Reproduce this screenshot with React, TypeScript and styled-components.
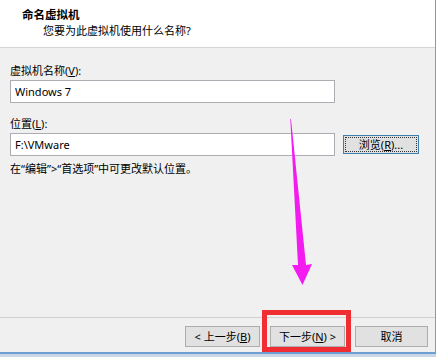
import styled, { createGlobalStyle } from 'styled-components';

const GlobalStyle = createGlobalStyle`
  html, body {
    margin: 0;
    padding: 0;
    background: #c9d6e3;
  }
  body {
    font-family: "Noto Sans", "Noto Sans CJK SC", sans-serif;
    font-size: 11px;
    color: #000;
  }
`;

const Ventana = styled.div`
  position: relative;
  width: 435px;
  height: 352px;
  background: #f0f0f0;
  border-right: 1px solid #6c9fd2;
  border-bottom: 2px solid #6c9fd2;
  display: flex;
  flex-direction: column;
  overflow: hidden;
`;

const Cabecera = styled.div`
  height: 48px;
  background: #fff;
  border-bottom: 1px solid #d5d5d5;
  padding: 7px 0 0 22px;
  box-sizing: border-box;
  flex-shrink: 0;
`;

const Titulo = styled.div`
  font-weight: bold;
  font-size: 11.5px;
  line-height: 16px;
`;

const Subtitulo = styled.div`
  line-height: 15px;
  margin: 0 0 0 21px;
`;

const Cuerpo = styled.div`
  flex: 1;
  padding: 15px 0 0 10px;
  display: flex;
  flex-direction: column;
`;

const Etiqueta = styled.label<{ $arriba?: number }>`
  display: block;
  line-height: 16px;
  margin-top: ${p => p.$arriba ?? 0}px;
  margin-bottom: 1px;
`;

const Fila = styled.div`
  display: flex;
  align-items: center;
  gap: 8px;
`;

const Entrada = styled.input`
  width: 325px;
  height: 23px;
  box-sizing: border-box;
  border: 1px solid #abadb3;
  background: #fff;
  padding: 0 4px;
  font-family: inherit;
  font-size: 11px;
  color: #000;
  outline: none;
`;

const Boton = styled.button<{ $foco?: boolean; $ancho?: number }>`
  width: ${p => p.$ancho ?? 75}px;
  height: ${p => (p.$foco ? 19 : 21)}px;
  box-sizing: border-box;
  background: #e1e1e1;
  border: 1px solid ${p => (p.$foco ? '#3c7fb1' : '#adadad')};
  font-family: inherit;
  font-size: 11px;
  color: #000;
  padding: 0;
  line-height: 1;
  outline: ${p => (p.$foco ? '1px dotted #333' : 'none')};
  outline-offset: -3px;
`;

const Nota = styled.div`
  line-height: 16px;
  margin-top: 5px;
`;

const Pie = styled.div`
  height: 35px;
  box-sizing: border-box;
  border-top: 1px solid #d0d0d0;
  padding: 8px 7px 0 0;
  display: flex;
  justify-content: flex-end;
  gap: 10px;
  flex-shrink: 0;
`;

const Marco = styled.div`
  position: absolute;
  left: 262px;
  top: 310px;
  width: 89px;
  height: 42px;
  box-sizing: border-box;
  border: 5px solid #ef2d32;
  pointer-events: none;
`;

const Flecha = styled.svg`
  position: absolute;
  left: 0;
  top: 0;
  pointer-events: none;
`;

export default function App() {
  return (
    <>
      <GlobalStyle />
      <Ventana>
        <Cabecera>
          <Titulo>命名虚拟机</Titulo>
          <Subtitulo>您要为此虚拟机使用什么名称?</Subtitulo>
        </Cabecera>
        <Cuerpo>
          <Etiqueta>虚拟机名称(<u>V</u>):</Etiqueta>
          <Fila>
            <Entrada defaultValue="Windows 7" />
          </Fila>
          <Etiqueta $arriba={13}>位置(<u>L</u>):</Etiqueta>
          <Fila>
            <Entrada defaultValue="F:\VMware" />
            <Boton $foco $ancho={76}>浏览(<u>R</u>)...</Boton>
          </Fila>
          <Nota>在“编辑”&gt;“首选项”中可更改默认位置。</Nota>
        </Cuerpo>
        <Pie>
          <Boton>&lt; 上一步(<u>B</u>)</Boton>
          <Boton>下一步(<u>N</u>) &gt;</Boton>
          <Boton $ancho={73}>取消</Boton>
        </Pie>
        <Marco />
        <Flecha width="436" height="357" viewBox="0 0 436 357">
          <polygon points="290.3,119 291,119 306,265 312,264 302.5,285 292,265 298,265" fill="#f31bf0" />
        </Flecha>
      </Ventana>
    </>
  );
}
